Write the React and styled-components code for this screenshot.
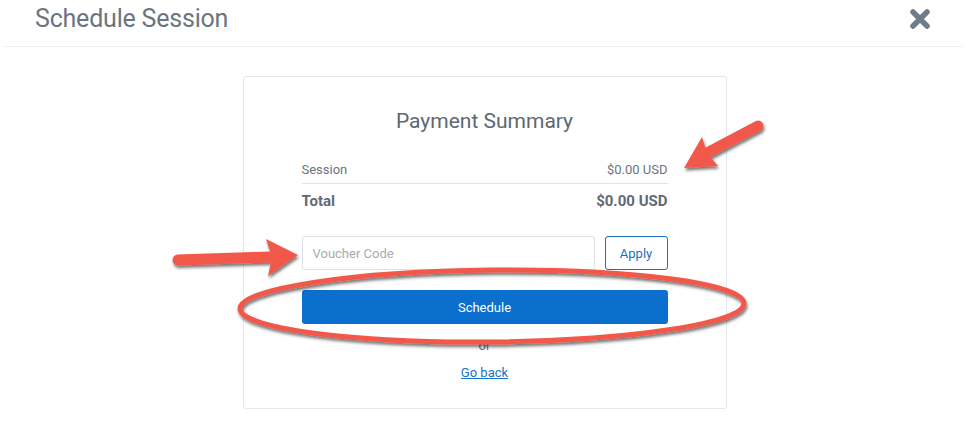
import React from "react";
import styled, { createGlobalStyle } from "styled-components";

const Global = createGlobalStyle`
  html, body { margin: 0; padding: 0; background: #fff; }
  body { font-family: Roboto, "Liberation Sans", Arial, sans-serif; }
  * { box-sizing: border-box; }
`;

const Page = styled.div`
  position: relative;
  width: 977px;
  height: 427px;
  overflow: hidden;
  background: #fff;
`;

const Modal = styled.div`
  margin: 0 14px 0 3px;
`;

const Header = styled.div`
  display: flex;
  align-items: center;
  justify-content: space-between;
  height: 47px;
  padding: 0 31px 9px 32px;
  border-bottom: 1px solid #eef1f4;
`;

const Title = styled.h1`
  margin: 0;
  font-size: 25px;
  font-weight: 400;
  color: #6b7580;
  letter-spacing: -0.2px;
`;

const Close = styled.button`
  border: 0;
  background: none;
  padding: 0;
  width: 24px;
  height: 24px;
  display: flex;
  align-items: center;
  justify-content: center;
  cursor: pointer;
`;

const Body = styled.div`
  display: flex;
  justify-content: center;
  padding: 29px 0 0 3px;
`;

const Card = styled.div`
  width: 484px;
  height: 333px;
  border: 1px solid #e3e7ea;
  border-radius: 3px;
  padding: 29px 58px 0 58px;
  display: flex;
  flex-direction: column;
  align-items: stretch;
`;

const CardTitle = styled.h2`
  margin: 0;
  text-align: center;
  font-size: 21px;
  line-height: 30px;
  font-weight: 400;
  color: #5d6873;
`;

const Summary = styled.div`
  margin-top: 20px;
`;

const Row = styled.div`
  display: flex;
  justify-content: space-between;
  align-items: center;
  height: ${(p) => (p.$total ? "33px" : "28px")};
  font-size: ${(p) => (p.$total ? "15px" : "13px")};
  font-weight: ${(p) => (p.$total ? 700 : 400)};
  color: ${(p) => (p.$total ? "#5f6a75" : "#6b7580")};
  border-bottom: ${(p) => (p.$total ? "none" : "1px solid #e1e5e8")};
`;

const VoucherRow = styled.div`
  display: flex;
  gap: 10px;
  margin-top: 19px;
`;

const Input = styled.input`
  flex: 1;
  height: 34px;
  border: 1px solid #dde2e6;
  border-radius: 3px;
  padding: 0 10px;
  font-family: inherit;
  font-size: 13px;
  color: #555;
  outline: none;
  &::placeholder { color: #a5adb5; }
`;

const ApplyButton = styled.button`
  width: 63px;
  height: 34px;
  border: 1px solid #1b6fc4;
  border-radius: 3px;
  background: #fff;
  color: #1b6fc4;
  font-family: inherit;
  font-size: 13px;
`;

const ScheduleButton = styled.button`
  margin-top: 20px;
  height: 34px;
  border: 0;
  border-radius: 3px;
  background: #0b6fcd;
  color: #fff;
  font-family: inherit;
  font-size: 13px;
`;

const Or = styled.div`
  margin-top: 12px;
  text-align: center;
  font-size: 13px;
  line-height: 20px;
  color: #6b7580;
`;

const BackLink = styled.a`
  margin-top: 7px;
  align-self: center;
  font-size: 13px;
  line-height: 20px;
  color: #1a73c8;
  text-decoration: underline;
`;

const Overlay = styled.svg`
  position: absolute;
  left: 0;
  top: 0;
  pointer-events: none;
`;

export default function App() {
  return (
    <Page>
      <Global />
      <Modal>
        <Header>
          <Title>Schedule Session</Title>
          <Close aria-label="Close">
            <svg width="22" height="22" viewBox="0 0 22 22">
              <path d="M4 4 L18 18 M18 4 L4 18" stroke="#6f7c89" strokeWidth="5.5" strokeLinecap="round" />
            </svg>
          </Close>
        </Header>
        <Body>
          <Card>
            <CardTitle>Payment Summary</CardTitle>
            <Summary>
              <Row>
                <span>Session</span>
                <span>$0.00 USD</span>
              </Row>
              <Row $total>
                <span>Total</span>
                <span>$0.00 USD</span>
              </Row>
            </Summary>
            <VoucherRow>
              <Input placeholder="Voucher Code" />
              <ApplyButton>Apply</ApplyButton>
            </VoucherRow>
            <ScheduleButton>Schedule</ScheduleButton>
            <Or>or</Or>
            <BackLink href="#">Go back</BackLink>
          </Card>
        </Body>
      </Modal>
      <Overlay width="977" height="427" viewBox="0 0 977 427">
        <defs>
          <filter id="sh" x="-20%" y="-40%" width="140%" height="180%">
            <feDropShadow dx="1" dy="2.5" stdDeviation="1.5" floodColor="#000" floodOpacity="0.55" />
          </filter>
        </defs>
        <g filter="url(#sh)">
          <ellipse cx="492" cy="306" rx="252" ry="36" fill="none" stroke="#f2594a" strokeWidth="5" transform="rotate(-0.6 492 306)" />
          <path d="M178 260 L270 257" stroke="#f2594a" strokeWidth="11" strokeLinecap="round" fill="none" />
          <path d="M266 239 L298 255 L268 276 L272 257 Z" fill="#f2594a" />
          <path d="M758 126 L705 154" stroke="#f2594a" strokeWidth="11" strokeLinecap="round" fill="none" />
          <path d="M684 168 L702 137 L707 153 L718 166 Z" fill="#f2594a" />
        </g>
      </Overlay>
    </Page>
  );
}
